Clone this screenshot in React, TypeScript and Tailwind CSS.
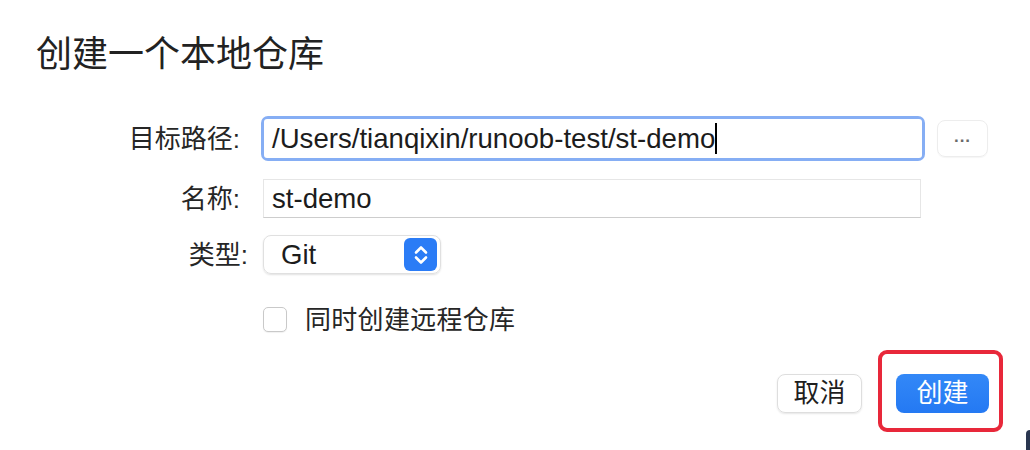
import React from 'react'

const cjk = { fontFamily: '"Liberation Sans", "Noto Sans CJK SC", sans-serif' }

const Label = ({ text, extra = '' }: { text: string; extra?: string }) => (
  <div className={`w-[240px] shrink-0 text-right text-[26px] leading-none text-[#262626] ${extra}`}>{text}</div>
)

export default function App() {
  return (
    <div className="relative w-[1030px] h-[450px] bg-white overflow-hidden" style={cjk}>
      {/* Title */}
      <div className="pt-[33px] pl-[36px] h-[77px] text-[36px] leading-[44px] text-[#222]">
        创建一个本地仓库
      </div>

      <div className="mt-[39px] flex flex-col">
        {/* Path */}
        <div className="flex items-center h-[45px]">
          <Label text="目标路径:" />
          <div className="ml-[21px] w-[664px] h-[45px] rounded-[7px] bg-[#86aef4] p-[3px]">
            <div className="h-full bg-white rounded-[3px] flex items-center pl-[8px] text-[27.6px] text-[#1c1c1c]">
              <span>/Users/tianqixin/runoob-test/st-demo</span>
              <span className="inline-block w-[2px] h-[31px] bg-black" />
            </div>
          </div>
          <div className="ml-[12px] w-[51px] h-[37px] rounded-[8px] border border-[#ededed] shadow-[0_1px_1px_rgba(0,0,0,0.04)] flex items-center justify-center text-[17px] font-bold text-[#6a6a6a] tracking-[1px] pb-[4px]">
            ...
          </div>
        </div>

        {/* Name */}
        <div className="flex items-center h-[39px] mt-[18px]">
          <Label text="名称:" />
          <div className="ml-[23px] w-[658px] h-[39px] border border-[#e6e6e6] border-b-[#cdcdcd] flex items-center pl-[8px] text-[27.6px] text-[#1c1c1c]">
            st-demo
          </div>
        </div>

        {/* Type */}
        <div className="flex items-center h-[39px] mt-[17px]">
          <Label text="类型:" extra="w-[248px]" />
          <div className="ml-[15px] w-[178px] h-[39px] rounded-[8px] border border-[#e0e0e0] shadow-[0_1px_2px_rgba(0,0,0,0.12)] flex items-center justify-between pl-[17px] pr-[3px]">
            <span className="text-[27.6px] text-[#1c1c1c]">Git</span>
            <div className="w-[33px] h-[33px] rounded-[6px] bg-[#2b7cf6] flex items-center justify-center">
              <svg width="16" height="24" viewBox="0 0 16 24" fill="none" stroke="white" strokeWidth="2.6" strokeLinecap="round" strokeLinejoin="round">
                <path d="M3 9.5 L8 4.5 L13 9.5" />
                <path d="M3 14.5 L8 19.5 L13 14.5" />
              </svg>
            </div>
          </div>
        </div>

        {/* Checkbox */}
        <div className="flex items-center h-[25px] mt-[33px] pl-[263px]">
          <div className="w-[24px] h-[25px] rounded-[5px] border border-[#c9c9c9] bg-white shadow-[0_1px_1px_rgba(0,0,0,0.06)]" />
          <span className="ml-[18px] text-[26px] leading-none text-[#262626] tracking-[0.3px]">同时创建远程仓库</span>
        </div>

        {/* Buttons */}
        <div className="flex justify-end items-center mt-[42px] pr-[41px] gap-[34px]">
          <div className="w-[85px] h-[39px] rounded-[8px] border border-[#dedede] shadow-[0_1px_2px_rgba(0,0,0,0.1)] flex items-center justify-center text-[26px] text-[#1e1e1e]">
            取消
          </div>
          <div className="w-[93px] h-[39px] rounded-[8px] bg-gradient-to-b from-[#3388f7] to-[#2479f3] flex items-center justify-center text-[26px] text-white">
            创建
          </div>
        </div>
      </div>

      {/* Highlight annotation */}
      <div className="absolute left-[878px] top-[350px] w-[125px] h-[82px] rounded-[9px] border-[4px] border-[#e8283a]" />

      {/* window corner */}
      <div className="absolute right-0 bottom-0 w-[4px] h-[20px] rounded-tl-full bg-[#2a3650]" />
    </div>
  )
}
